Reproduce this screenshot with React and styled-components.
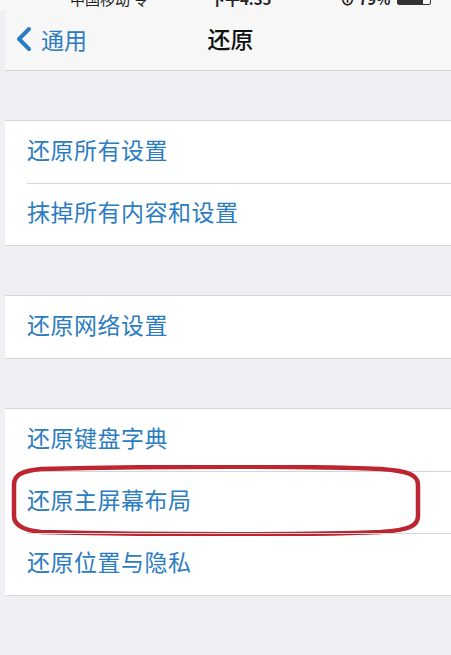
import React from 'react';
import styled, { createGlobalStyle } from 'styled-components';

const blue = '#2b7cc1';
const line = '#d6d6da';
const groupBg = '#efeff4';

const GlobalStyle = createGlobalStyle`
  body {
    margin: 0;
    background: #fafafa;
    font-family: "Noto Sans CJK SC", "Noto Sans", sans-serif;
  }
`;

const Page = styled.div`
  width: 451px;
  height: 655px;
  overflow: hidden;
  display: flex;
  flex-direction: column;
  background: ${groupBg};
`;

const StatusBar = styled.div`
  height: 10px;
  overflow: hidden;
  display: flex;
  align-items: flex-end;
  background: #f7f7f8;
  padding-left: 70px;
  font-size: 15px;
  color: #222;
`;

const StatusInner = styled.div`
  display: flex;
  align-items: center;
  width: 375px;
  height: 20px;
  margin-bottom: 2px;
`;

const Carrier = styled.span`
  width: 140px;
`;

const Clock = styled.span`
  width: 130px;
  font-weight: 600;
`;

const Battery = styled.span`
  display: flex;
  align-items: center;
  gap: 6px;
  font-weight: 600;
`;

const BatteryBody = styled.span`
  width: 32px;
  height: 12px;
  border: 1px solid #333;
  border-radius: 2px;
  background: linear-gradient(to right, #333 79%, transparent 79%);
`;

const NavBar = styled.div`
  height: 60px;
  display: grid;
  grid-template-columns: 1fr auto 1fr;
  align-items: center;
  background: #f7f7f8;
  border-bottom: 1px solid ${line};
  margin-left: 5px;
`;

const BackButton = styled.div`
  display: flex;
  align-items: center;
  gap: 7px;
  padding-left: 9px;
  padding-bottom: 2px;
  color: ${blue};
  font-size: 23px;
`;

const Title = styled.div`
  font-size: 23px;
  font-weight: 500;
  color: #111;
  padding-left: 5px;
  padding-bottom: 4px;
`;

const Body = styled.div`
  flex: 1;
  margin-left: 5px;
  padding-top: 49px;
  display: flex;
  flex-direction: column;
  gap: 49px;
`;

const Group = styled.div`
  background: #fff;
  border-top: 1px solid ${line};
  border-bottom: 1px solid ${line};
`;

const RowWrap = styled.div`
  position: relative;
  & + & > div:first-child {
    border-top: 1px solid ${line};
  }
`;

const Row = styled.div`
  height: 62px;
  display: flex;
  align-items: center;
  margin-left: 22px;
  padding-bottom: 7px;
  box-sizing: border-box;
  font-size: 23px;
  color: ${blue};
  letter-spacing: 0.5px;
`;

const Mark = styled.svg`
  position: absolute;
  left: 6px;
  top: -6px;
  width: 410px;
  height: 71px;
  pointer-events: none;
`;

const Ring = () => (
  <Mark viewBox="0 0 410 71">
    <path
      d="M30 4 C150 1 300 1 370 4 C398 6 407 10 407 20 L407 51 C407 61 398 65 370 67 C300 70 150 70 30 67 C10 65 3 59 3 51 L3 20 C3 10 10 6 30 4 Z"
      fill="none"
      stroke="#bd2530"
      strokeWidth="4.5"
    />
  </Mark>
);

const groups = [
  ['还原所有设置', '抹掉所有内容和设置'],
  ['还原网络设置'],
  ['还原键盘字典', '还原主屏幕布局', '还原位置与隐私'],
];

function App() {
  return (
    <>
      <GlobalStyle />
      <Page>
        <StatusBar>
          <StatusInner>
            <Carrier>中国移动 令</Carrier>
            <Clock>下午4:35</Clock>
            <Battery>
              ⊕ 79%
              <BatteryBody />
            </Battery>
          </StatusInner>
        </StatusBar>
        <NavBar>
          <BackButton>
            <svg width="20" height="26" viewBox="0 0 20 26">
              <path d="M15 3 L5 13 L15 23" fill="none" stroke={blue} strokeWidth="4" strokeLinecap="round" strokeLinejoin="round" />
            </svg>
            通用
          </BackButton>
          <Title>还原</Title>
          <div />
        </NavBar>
        <Body>
          {groups.map((items, gi) => (
            <Group key={gi}>
              {items.map((label) => (
                <RowWrap key={label}>
                  <Row>{label}</Row>
                  {label === '还原主屏幕布局' && <Ring />}
                </RowWrap>
              ))}
            </Group>
          ))}
        </Body>
      </Page>
    </>
  );
}

export default App;
